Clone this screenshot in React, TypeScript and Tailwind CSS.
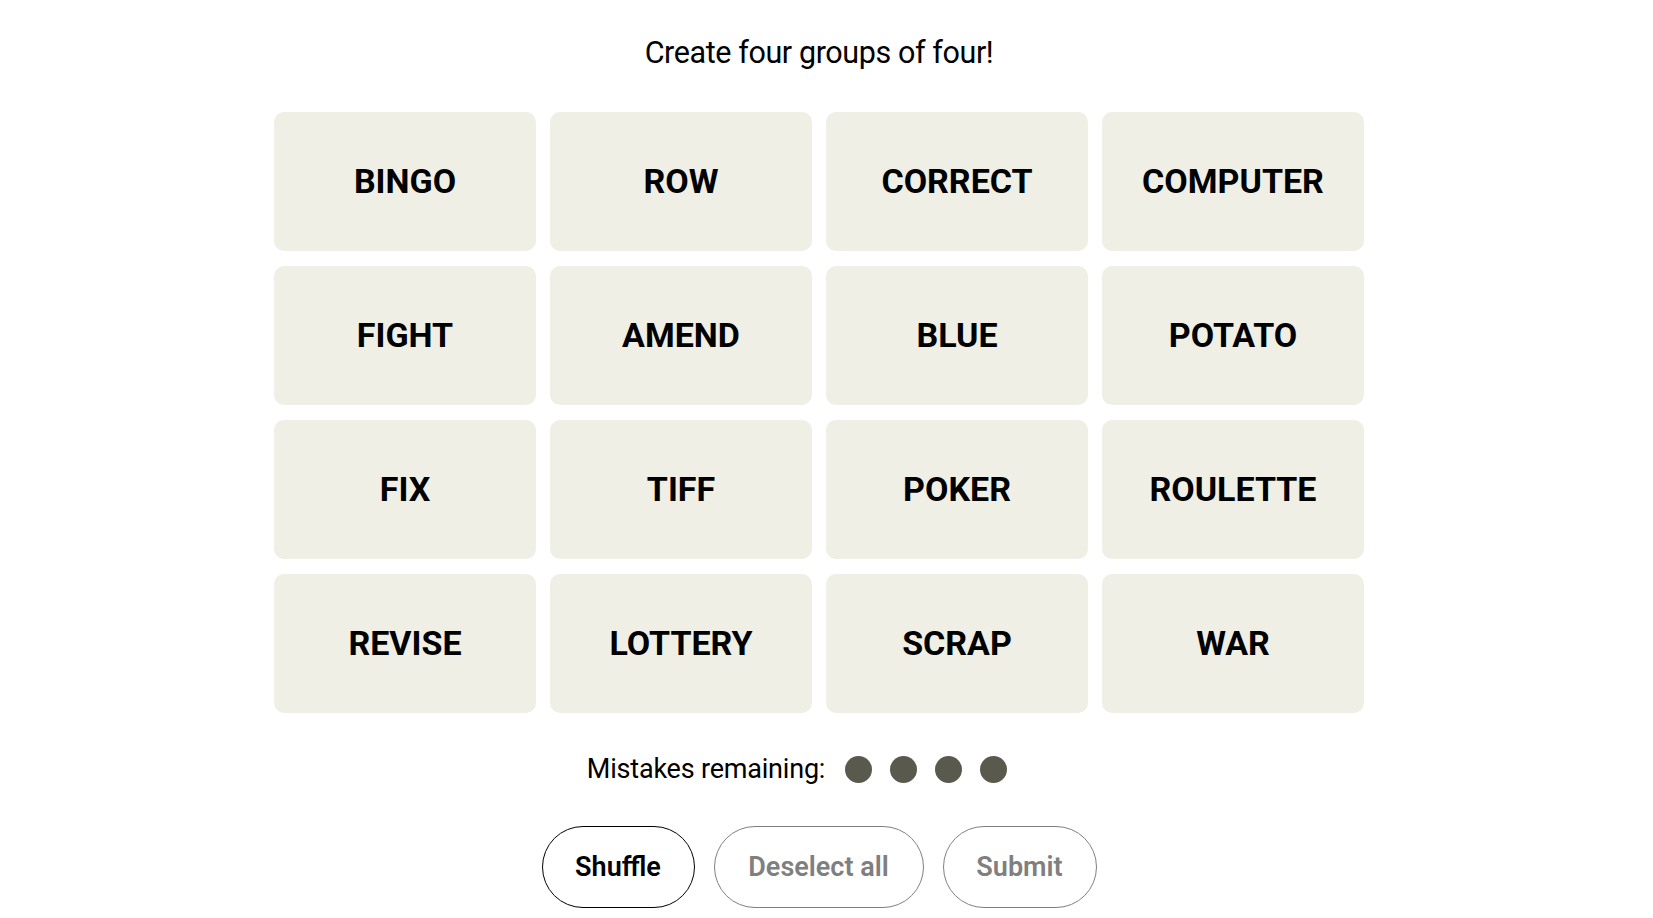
const words = [
  "BINGO", "ROW", "CORRECT", "COMPUTER",
  "FIGHT", "AMEND", "BLUE", "POTATO",
  "FIX", "TIFF", "POKER", "ROULETTE",
  "REVISE", "LOTTERY", "SCRAP", "WAR",
];

export default function App() {
  return (
    <div className="min-h-screen bg-white pr-[15px] flex flex-col items-center text-black font-['Roboto',sans-serif]">
      <div className="mt-[35px] h-[36px] text-[30.5px] leading-[36px] tracking-[-0.4px]">Create four groups of four!</div>

      <div className="mt-[41px] grid grid-cols-[repeat(4,262px)] gap-x-[14px] gap-y-[15px]">
        {words.map((w) => (
          <div
            key={w}
            className="h-[139px] rounded-[10px] bg-[#efefe6] flex items-center justify-center text-[34px] font-bold"
          >
            {w}
          </div>
        ))}
      </div>

      <div className="mt-[42px] mr-[44px] h-[28px] flex items-center">
        <span className="text-[27px] leading-[28px] tracking-[-0.2px]">Mistakes remaining:</span>
        <div className="ml-[20px] flex gap-[18px]">
          <span className="w-[27px] h-[27px] rounded-full bg-[#5a594e]" />
          <span className="w-[27px] h-[27px] rounded-full bg-[#5a594e]" />
          <span className="w-[27px] h-[27px] rounded-full bg-[#5a594e]" />
          <span className="w-[27px] h-[27px] rounded-full bg-[#5a594e]" />
        </div>
      </div>

      <div className="mt-[43px] flex gap-[19px]">
        <button className="w-[153px] h-[82px] rounded-full border border-black text-[27px] font-semibold text-black">Shuffle</button>
        <button className="w-[210px] h-[82px] rounded-full border border-[#7f7f7f] text-[27px] font-semibold text-[#7f7f7f]">Deselect all</button>
        <button className="w-[154px] h-[82px] rounded-full border border-[#7f7f7f] text-[27px] font-semibold text-[#7f7f7f]">Submit</button>
      </div>
    </div>
  );
}
